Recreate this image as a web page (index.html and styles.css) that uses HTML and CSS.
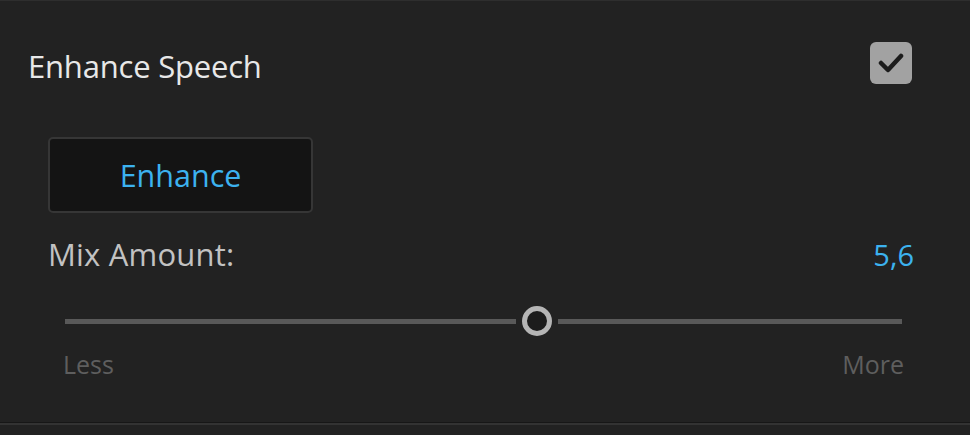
FILE: index.html
```html
<!DOCTYPE html>
<html>

<head>
	<meta charset="UTF-8">
	<title>Enhance Speech</title>
	<link rel="stylesheet" href="styles.css">
</head>

<body>
	<div class="panel">
		<div class="header">
			<span class="title">Enhance Speech</span>
			<span class="checkbox">
				<svg width="26" height="20" viewBox="0 0 26 20">
					<path d="M3 10 L10 17 L23 3" fill="none" stroke="#1c1c1c" stroke-width="4.5" stroke-linecap="round" stroke-linejoin="round" />
				</svg>
			</span>
		</div>
		<div class="content">
			<button class="enhance">Enhance</button>
			<div class="mix-row">
				<span class="mix-label">Mix Amount:</span>
				<span class="mix-value">5,6</span>
			</div>
			<div class="slider">
				<div class="track"></div>
				<div class="knob"></div>
				<div class="track"></div>
			</div>
			<div class="range-labels">
				<span>Less</span>
				<span>More</span>
			</div>
		</div>
	</div>
</body>

</html>
```

FILE: styles.css
```css
body {
	margin: 0;
	background: #222222;
	font-family: "Open Sans", sans-serif;
	height: 435px;
	overflow: hidden;
}

.panel {
	height: 423px;
	border-top: 1px solid #2e2e2e;
	border-bottom: 1px solid #171717;
	box-shadow: 0 2px 0 #333333;
	box-sizing: border-box;
}

.header {
	display: flex;
	justify-content: space-between;
	align-items: flex-start;
	padding: 41px 58px 0 28px;
}

.title {
	color: #e8e8e8;
	font-size: 31px;
	letter-spacing: -0.2px;
	line-height: 42px;
	margin-top: 3px;
}

.checkbox {
	width: 42px;
	height: 42px;
	border-radius: 6px;
	background: #a2a2a2;
	display: flex;
	align-items: center;
	justify-content: center;
}

.content {
	padding: 50px 56px 0 48px;
}

.enhance {
	width: 265px;
	height: 76px;
	background: #141414;
	border: 2px solid #363636;
	border-radius: 5px;
	color: #3cb2ef;
	font-family: "Open Sans", sans-serif;
	font-size: 30.5px;
	padding: 0;
}

.mix-row {
	display: flex;
	justify-content: space-between;
	align-items: baseline;
	margin-top: 21px;
	line-height: 40px;
}

.mix-label {
	color: #c2c2c2;
	font-size: 31px;
	letter-spacing: 0.2px;
}

.mix-value {
	color: #3cb2ef;
	font-size: 29px;
}

.slider {
	display: flex;
	align-items: center;
	margin: 30px 12px 0 17px;
	height: 32px;
}

.track {
	height: 5px;
	background: #595959;
}

.track:first-child {
	flex: 451;
}

.track:last-child {
	flex: 344;
}

.knob {
	width: 20px;
	height: 20px;
	border: 5px solid #b5b5b5;
	border-radius: 50%;
	background: #1c1c1c;
	margin: 0 6px;
}

.range-labels {
	display: flex;
	justify-content: space-between;
	margin: 10px 10px 0 15px;
	color: #5e5e5e;
	font-size: 25px;
}
```
